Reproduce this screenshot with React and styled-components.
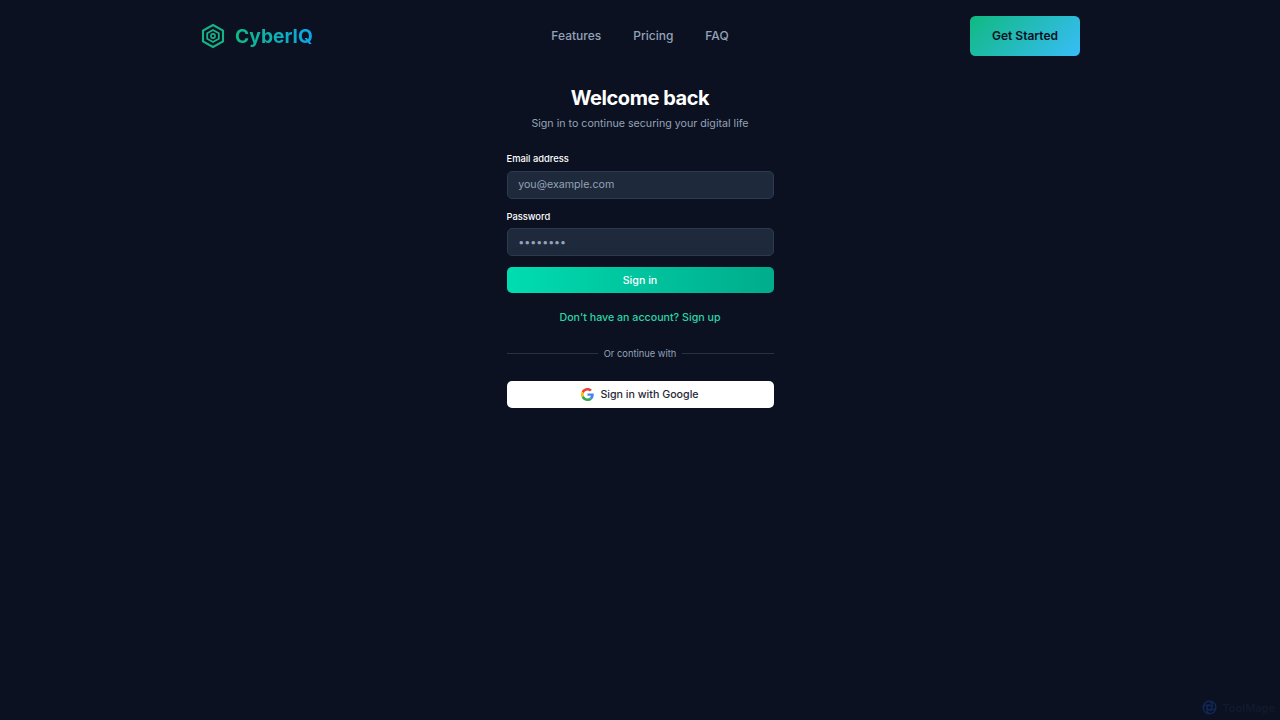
import React from "react"
import styled, { createGlobalStyle } from "styled-components"

const GlobalStyle = createGlobalStyle`
  html, body {
    margin: 0;
    height: 100%;
    background: #0b1120;
    font-family: "Inter", "Liberation Sans", sans-serif;
  }
  * { box-sizing: border-box; }
`

const Page = styled.div`
  min-height: 720px;
  background: #0b1120;
`

const Header = styled.header`
  height: 72px;
  padding: 16px 200px;
  display: grid;
  grid-template-columns: 1fr auto 1fr;
  align-items: flex-start;
`

const Brand = styled.a`
  display: flex;
  align-items: center;
  gap: 10px;
  height: 40px;
  padding-left: 1px;
  text-decoration: none;
`

const BrandName = styled.span`
  font-size: 19.2px;
  font-weight: 700;
  background: linear-gradient(90deg, #10b981, #0ea5e9);
  -webkit-background-clip: text;
  background-clip: text;
  color: transparent;
`

const Nav = styled.nav`
  display: flex;
  gap: 32px;
  height: 39px;
  align-items: center;
`

const NavLink = styled.a`
  color: #94a3b8;
  font-size: 12px;
  font-weight: 500;
  text-decoration: none;
`

const CtaWrap = styled.div`
  display: flex;
  justify-content: flex-end;
`

const Cta = styled.button`
  width: 110px;
  height: 40px;
  padding: 0 0 1px;
  border: 0;
  border-radius: 5.33px;
  background: linear-gradient(135deg, #10b981, #38bdf8);
  color: #0b1120;
  font: 600 12px "Inter", sans-serif;
`

const Main = styled.main`
  width: 267px;
  margin: 0 auto;
  padding-top: 14px;
`

const Title = styled.h1`
  margin: 0;
  color: #fff;
  font-size: 20px;
  line-height: 24px;
  font-weight: 700;
  letter-spacing: -0.45px;
  text-align: center;
`

const Subtitle = styled.p`
  margin: 6px 0 0;
  color: #94a3b8;
  font-size: 10.67px;
  line-height: 16px;
  text-align: center;
`

const Form = styled.form`
  margin-top: 20.33px;
  display: flex;
  flex-direction: column;
`

const Label = styled.label`
  color: #fff;
  font-size: 9.33px;
  line-height: 13.33px;
  font-weight: 500;
  margin-bottom: 5.33px;
`

const Input = styled.input`
  height: 28px;
  margin-bottom: 10.67px;
  padding: 0 10.67px;
  border: 1px solid #2b3a4e;
  border-radius: 5px;
  background: #1e293b;
  color: #94a3b8;
  font: 10.67px "Inter", sans-serif;
  outline: none;
  &::placeholder { color: #94a3b8; opacity: 1; }
`

const SubmitButton = styled.button`
  height: 26.33px;
  padding: 0;
  border: 0;
  border-radius: 5px;
  background: linear-gradient(90deg, #00dcb0, #00ac8c);
  color: #fff;
  font: 500 10.67px "Inter", sans-serif;
`

const SwitchLink = styled.a`
  display: block;
  margin-top: 16.67px;
  color: #2dd4a7;
  font-size: 10.67px;
  line-height: 16px;
  font-weight: 500;
  text-align: center;
`

const Divider = styled.div`
  margin-top: 21px;
  display: flex;
  align-items: center;
  gap: 5.33px;
  color: #94a3b8;
  font-size: 9.33px;
  line-height: 14px;
  &::before, &::after {
    content: "";
    flex: 1;
    height: 1px;
    background: #273140;
  }
`

const GoogleButton = styled.button`
  width: 100%;
  height: 27px;
  margin-top: 20px;
  border: 0;
  border-radius: 5px;
  background: #fff;
  color: #1f2937;
  font: 500 10.67px "Inter", sans-serif;
  display: flex;
  align-items: center;
  justify-content: center;
  gap: 6px;
`

const Watermark = styled.div`
  position: absolute;
  right: 5px;
  bottom: 5px;
  display: flex;
  align-items: center;
  gap: 5px;
  color: #111a2d;
  font-size: 11px;
  font-weight: 600;
`

const LogoIcon = () => (
  <svg width="24" height="26" viewBox="0 0 24 26" fill="none" stroke="#14b488">
    <path d="M12 2l10 5.6v10.800L12 24 2 18.400V7.600z" strokeWidth="2.100" />
    <path d="M12 7l5.800 3.200v5.600L12 19l-5.800-3.200v-5.600z" strokeWidth="1.800" />
    <circle cx="12" cy="13" r="2.100" strokeWidth="1.600" />
  </svg>
)

const GoogleIcon = () => (
  <svg width="13" height="13" viewBox="0 0 48 48">
    <path fill="#EA4335" d="M24 9.5c3.5 0 6.7 1.2 9.2 3.600l6.900-6.900C35.900 2.400 30.400 0 24 0 14.600 0 6.500 5.400 2.600 13.200l8 6.200C12.500 13.700 17.800 9.500 24 9.500z" />
    <path fill="#4285F4" d="M47 24.500c0-1.600-.1-3.100-.4-4.500H24v9h12.900c-.6 3-2.200 5.500-4.700 7.200l7.700 6C44.400 38.000 47 31.800 47 24.500z" />
    <path fill="#FBBC05" d="M10.600 28.600c-.5-1.400-.8-3-.8-4.600s.3-3.200.8-4.600l-8-6.200C.9 16.500 0 20.100 0 24s.9 7.500 2.600 10.800l8-6.200z" />
    <path fill="#34A853" d="M24 48c6.500 0 11.900-2.100 15.900-5.800l-7.700-6c-2.100 1.400-4.900 2.300-8.200 2.300-6.200 0-11.500-4.200-13.400-9.900l-8 6.200C6.500 42.600 14.600 48 24 48z" />
  </svg>
)

const MageIcon = () => (
  <svg width="15" height="15" viewBox="0 0 16 16" fill="none" stroke="#12285a" strokeWidth="1.400">
    <circle cx="8" cy="8" r="6.800" />
    <circle cx="8" cy="8" r="2.600" />
    <path d="M8 1.200c3 1.800 3.200 4.400 2.600 6.800M14.800 8c-1.800 3-4.400 3.200-6.800 2.600M8 14.800c-3-1.800-3.200-4.400-2.600-6.800M1.200 8c1.800-3 4.400-3.200 6.800-2.600" />
  </svg>
)

export default function App() {
  return (
    <Page>
      <GlobalStyle />
      <Header>
        <Brand href="#">
          <LogoIcon />
          <BrandName>CyberIQ</BrandName>
        </Brand>
        <Nav>
          <NavLink href="#">Features</NavLink>
          <NavLink href="#">Pricing</NavLink>
          <NavLink href="#">FAQ</NavLink>
        </Nav>
        <CtaWrap>
          <Cta>Get Started</Cta>
        </CtaWrap>
      </Header>
      <Main>
        <Title>Welcome back</Title>
        <Subtitle>Sign in to continue securing your digital life</Subtitle>
        <Form onSubmit={e => e.preventDefault()}>
          <Label>Email address</Label>
          <Input type="email" placeholder="you@example.com" />
          <Label>Password</Label>
          <Input type="password" defaultValue="password" />
          <SubmitButton>Sign in</SubmitButton>
        </Form>
        <SwitchLink>Don't have an account? Sign up</SwitchLink>
        <Divider>Or continue with</Divider>
        <GoogleButton>
          <GoogleIcon />
          Sign in with Google
        </GoogleButton>
      </Main>
      <Watermark>
        <MageIcon />
        ToolMage
      </Watermark>
    </Page>
  )
}
